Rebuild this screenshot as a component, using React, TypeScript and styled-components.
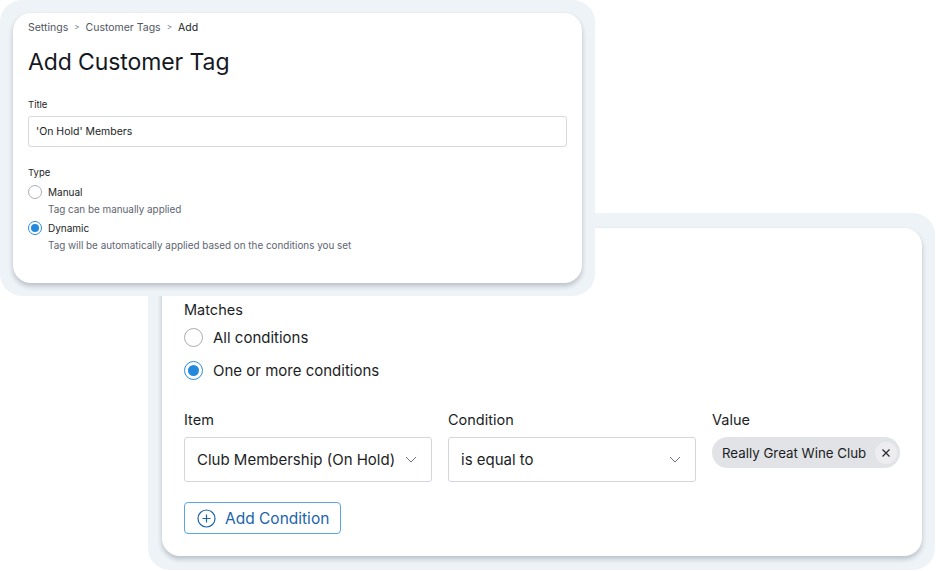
import React from "react";
import styled, { createGlobalStyle } from "styled-components";

const GlobalStyle = createGlobalStyle`
  html, body {
    margin: 0;
    padding: 0;
    background: #ffffff;
  }
  body {
    font-family: Inter, "Noto Sans", "Liberation Sans", sans-serif;
    color: #1b1e25;
    -webkit-font-smoothing: antialiased;
  }
`;

const Stage = styled.div`
  position: relative;
  width: 936px;
  height: 571px;
  overflow: hidden;
`;

// the two "windows" lie on a free canvas and overlap each other
const Frame = styled.div<{ $left: number; $top: number; $w: number; $h: number; $z: number; $pad: string }>`
  position: absolute;
  left: ${(p) => p.$left}px;
  top: ${(p) => p.$top}px;
  width: ${(p) => p.$w}px;
  height: ${(p) => p.$h}px;
  z-index: ${(p) => p.$z};
  box-sizing: border-box;
  padding: ${(p) => p.$pad};
  background: #edf3f7;
  border-radius: 22px;
  display: flex;
`;

const Card = styled.section<{ $pad: string }>`
  flex: 1;
  box-sizing: border-box;
  background: #fff;
  border-radius: 18px;
  box-shadow: 0 3px 5px rgba(20, 30, 45, 0.24);
  padding: ${(p) => p.$pad};
  display: flex;
  flex-direction: column;
`;

const Crumbs = styled.nav`
  display: flex;
  align-items: center;
  gap: 6px;
  font-size: 10.5px;
  color: #4f5664;
  height: 14px;
`;

const Sep = styled.span`
  font-size: 8px;
  color: #6b7280;
`;

const Current = styled.span`
  color: #1b1e25;
`;

const Title = styled.h1`
  margin: 14px 0 0;
  font-size: 23px;
  font-weight: 400;
  line-height: 28px;
  color: #15181f;
  letter-spacing: -0.1px;
`;

const SmallLabel = styled.div<{ $mt: number }>`
  margin-top: ${(p) => p.$mt}px;
  font-size: 9.5px;
  line-height: 12px;
  color: #1b1e25;
`;

const TextInput = styled.div`
  margin-top: 5px;
  height: 31px;
  box-sizing: border-box;
  border: 1px solid #d6d9df;
  border-radius: 3px;
  display: flex;
  align-items: center;
  padding-left: 7px;
  font-size: 10.5px;
  color: #1b1e25;
`;

const OptionList = styled.div`
  margin-top: 6px;
  display: flex;
  flex-direction: column;
  gap: 6px;
`;

const Option = styled.div`
  display: flex;
  flex-direction: column;
`;

const OptionRow = styled.label<{ $gap: number }>`
  display: flex;
  align-items: center;
  gap: ${(p) => p.$gap}px;
`;

const Radio = styled.span<{ $size: number; $checked?: boolean }>`
  width: ${(p) => p.$size}px;
  height: ${(p) => p.$size}px;
  flex: none;
  box-sizing: border-box;
  border-radius: 50%;
  border: ${(p) => (p.$checked ? "1.5px solid #2d8ad9" : "1.5px solid #a8adb5")};
  display: flex;
  align-items: center;
  justify-content: center;
  &::after {
    content: "";
    display: ${(p) => (p.$checked ? "block" : "none")};
    width: ${(p) => Math.round(p.$size * 0.58)}px;
    height: ${(p) => Math.round(p.$size * 0.58)}px;
    border-radius: 50%;
    background: #2489dc;
  }
`;

const OptionText = styled.span<{ $size: number }>`
  font-size: ${(p) => p.$size}px;
  color: #1b1e25;
  line-height: 1.2;
`;

const OptionHint = styled.div`
  margin-left: 20px;
  margin-top: 4px;
  font-size: 9.9px;
  color: #5d6472;
  line-height: 12px;
`;

const Section = styled.div`
  display: flex;
  flex-direction: column;
`;

const BigLabel = styled.div`
  font-size: 14.5px;
  line-height: 18px;
  color: #1b1e25;
`;

const BigOptions = styled.div`
  margin-top: 9px;
  display: flex;
  flex-direction: column;
  gap: 14px;
`;

const FieldGrid = styled.div`
  margin-top: 31px;
  display: grid;
  grid-template-columns: 248px 248px 188px;
  column-gap: 16px;
  align-items: start;
`;

const Field = styled.div`
  display: flex;
  flex-direction: column;
  gap: 8px;
`;

const Select = styled.div`
  height: 45px;
  box-sizing: border-box;
  border: 1px solid #d3d6dc;
  border-radius: 3px;
  display: flex;
  align-items: center;
  justify-content: space-between;
  padding: 0 14px 0 12px;
  font-size: 15px;
  color: #1b1e25;
`;

const Chip = styled.div`
  height: 31px;
  box-sizing: border-box;
  border-radius: 16px;
  background: #e2e3e6;
  display: flex;
  align-items: center;
  justify-content: space-between;
  padding: 0 3px 0 10px;
  font-size: 13.3px;
  color: #1b1e25;
  white-space: nowrap;
`;

const ChipClose = styled.span`
  width: 22px;
  height: 22px;
  border-radius: 50%;
  background: #ededef;
  display: flex;
  align-items: center;
  justify-content: center;
`;

const AddButton = styled.button`
  margin-top: 20px;
  align-self: flex-start;
  height: 33px;
  box-sizing: border-box;
  border: 1px solid #58a6e2;
  border-radius: 4px;
  background: #fff;
  padding: 0 11px 0 12px;
  display: flex;
  align-items: center;
  gap: 9px;
  font-family: inherit;
  font-size: 15.5px;
  color: #1a64ad;
`;

const Chevron = () => (
  <svg width="12" height="7" viewBox="0 0 12 7" fill="none">
    <path d="M1 1l5 5 5-5" stroke="#6b7280" strokeWidth="1" />
  </svg>
);

const Close = () => (
  <svg width="10" height="10" viewBox="0 0 10 10" fill="none">
    <path d="M1.5 1.5l7 7M8.5 1.5l-7 7" stroke="#2a2d33" strokeWidth="1.3" />
  </svg>
);

const PlusCircle = () => (
  <svg width="19" height="19" viewBox="0 0 19 19" fill="none">
    <circle cx="9.5" cy="9.5" r="8.5" stroke="#1a64ad" strokeWidth="1.2" />
    <path d="M9.5 5.5v8M5.5 9.5h8" stroke="#1a64ad" strokeWidth="1.2" />
  </svg>
);

export default function App() {
  return (
    <>
      <GlobalStyle />
      <Stage>
        <Frame $left={0} $top={0} $w={595} $h={296} $z={2} $pad="13px">
          <Card $pad="7px 15px 0 15px">
            <Crumbs>
              <span>Settings</span>
              <Sep>&gt;</Sep>
              <span>Customer Tags</span>
              <Sep>&gt;</Sep>
              <Current>Add</Current>
            </Crumbs>
            <Title>Add Customer Tag</Title>
            <SmallLabel $mt={23}>Title</SmallLabel>
            <TextInput>'On Hold' Members</TextInput>
            <SmallLabel $mt={20}>Type</SmallLabel>
            <OptionList>
              <Option>
                <OptionRow $gap={6}>
                  <Radio $size={14} />
                  <OptionText $size={10}>Manual</OptionText>
                </OptionRow>
                <OptionHint>Tag can be manually applied</OptionHint>
              </Option>
              <Option>
                <OptionRow $gap={6}>
                  <Radio $size={14} $checked />
                  <OptionText $size={10}>Dynamic</OptionText>
                </OptionRow>
                <OptionHint>Tag will be automatically applied based on the conditions you set</OptionHint>
              </Option>
            </OptionList>
          </Card>
        </Frame>

        <Frame $left={148} $top={213} $w={787} $h={357} $z={1} $pad="15px 13px 14px 14px">
          <Card $pad="73px 22px 22px 22px">
            <Section>
              <BigLabel>Matches</BigLabel>
              <BigOptions>
                <OptionRow $gap={10}>
                  <Radio $size={19} />
                  <OptionText $size={15}>All conditions</OptionText>
                </OptionRow>
                <OptionRow $gap={10}>
                  <Radio $size={19} $checked />
                  <OptionText $size={15}>One or more conditions</OptionText>
                </OptionRow>
              </BigOptions>
            </Section>
            <FieldGrid>
              <Field>
                <BigLabel>Item</BigLabel>
                <Select>
                  <span>Club Membership (On Hold)</span>
                  <Chevron />
                </Select>
              </Field>
              <Field>
                <BigLabel>Condition</BigLabel>
                <Select>
                  <span>is equal to</span>
                  <Chevron />
                </Select>
              </Field>
              <Field>
                <BigLabel>Value</BigLabel>
                <Chip>
                  <span>Really Great Wine Club</span>
                  <ChipClose>
                    <Close />
                  </ChipClose>
                </Chip>
              </Field>
            </FieldGrid>
            <AddButton>
              <PlusCircle />
              Add Condition
            </AddButton>
          </Card>
        </Frame>
      </Stage>
    </>
  );
}
